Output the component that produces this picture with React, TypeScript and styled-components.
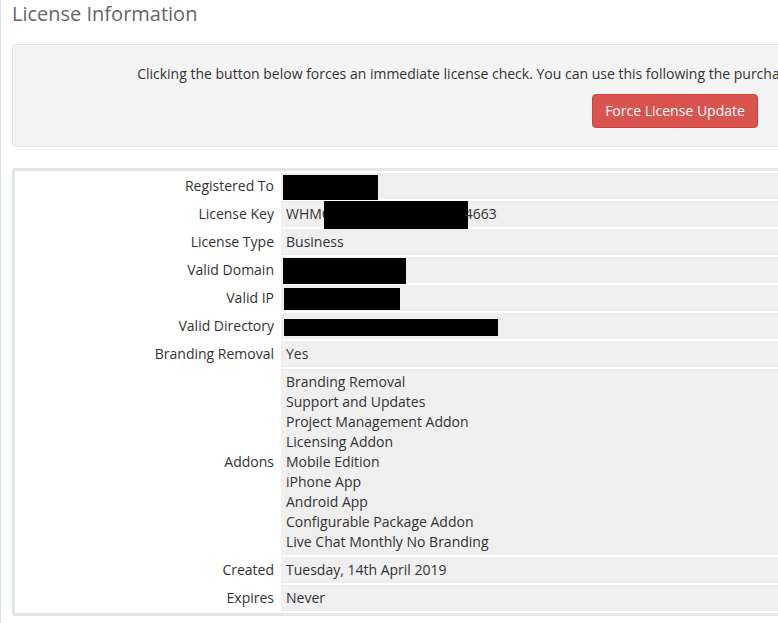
import React from 'react'
import styled, { createGlobalStyle } from 'styled-components'

const GlobalStyle = createGlobalStyle`
  html, body {
    margin: 0;
    padding: 0;
    background: #fff;
    overflow: hidden;
  }
  body {
    font-family: "Open Sans", "Liberation Sans", sans-serif;
    font-size: 14px;
    color: #333;
  }
`

const Page = styled.div`
  border-left: 1px solid #d3deec;
  padding: 0 0 0 11px;
  height: 623px;
  box-sizing: border-box;
  overflow: hidden;
`

const Title = styled.h1`
  margin: 0;
  font-size: 20px;
  font-weight: 400;
  line-height: 27px;
  color: #666;
`

const Alert = styled.div`
  width: 1326px;
  box-sizing: border-box;
  margin-top: 17px;
  padding: 19px 15px 18px;
  background: #f4f4f4;
  border: 1px solid #e3e3e3;
  border-radius: 4px;
  text-align: center;
`

const AlertText = styled.p`
  margin: 0 0 10px;
  line-height: 20px;
  white-space: nowrap;
`

const DangerButton = styled.button`
  font-family: inherit;
  font-size: 14px;
  line-height: 20px;
  padding: 6px 12px;
  color: #fff;
  background: #d9534f;
  border: 1px solid #d43f3a;
  border-radius: 4px;
  cursor: pointer;
`

const InfoTable = styled.table`
  width: 1326px;
  margin-top: 21px;
  border: 3px solid #e1e6e9;
  border-radius: 3px;
  border-spacing: 2px;
  border-collapse: separate;
`

const Label = styled.td`
  width: 257px;
  height: 20px;
  padding: 3px 5px 3px 0;
  text-align: right;
  line-height: 20px;
  vertical-align: middle;
  white-space: nowrap;
`

const Value = styled.td`
  height: 20px;
  padding: 3px 5px;
  background: #efefef;
  line-height: 20px;
  vertical-align: middle;
  white-space: nowrap;
`

const Redacted = styled.span<{ $w: number; $h: number; $shift?: number }>`
  display: inline-block;
  vertical-align: middle;
  width: ${p => p.$w}px;
  height: ${p => p.$h}px;
  margin-top: ${p => -(p.$h - 10) / 2}px;
  margin-bottom: ${p => -(p.$h - 10) / 2}px;
  background: #000;
  margin-left: ${p => p.$shift ?? 0}px;
`

const AddonLine = styled.div`
  line-height: 20px;
`

const addons = [
  'Branding Removal',
  'Support and Updates',
  'Project Management Addon',
  'Licensing Addon',
  'Mobile Edition',
  'iPhone App',
  'Android App',
  'Configurable Package Addon',
  'Live Chat Monthly No Branding',
]

const App = () => {
  return (
    <>
      <GlobalStyle />
      <Page>
        <Title>License Information</Title>
        <Alert>
          <AlertText>
            Clicking the button below forces an immediate license check. You can use this following the purchase of new addons or upgrades to ensure your license is up to date.
          </AlertText>
          <DangerButton>Force License Update</DangerButton>
        </Alert>
        <InfoTable>
          <tbody>
            <tr>
              <Label>Registered To</Label>
              <Value><Redacted $w={95} $h={25} $shift={-3} /></Value>
            </tr>
            <tr>
              <Label>License Key</Label>
              <Value>
                WHMC<Redacted $w={144} $h={28} $shift={-7} style={{ marginRight: -3 }} />4663
              </Value>
            </tr>
            <tr>
              <Label>License Type</Label>
              <Value>Business</Value>
            </tr>
            <tr>
              <Label>Valid Domain</Label>
              <Value><Redacted $w={123} $h={26} $shift={-3} /></Value>
            </tr>
            <tr>
              <Label>Valid IP</Label>
              <Value><Redacted $w={116} $h={22} $shift={-2} /></Value>
            </tr>
            <tr>
              <Label>Valid Directory</Label>
              <Value><Redacted $w={214} $h={17} $shift={-2} /></Value>
            </tr>
            <tr>
              <Label>Branding Removal</Label>
              <Value>Yes</Value>
            </tr>
            <tr>
              <Label>Addons</Label>
              <Value>
                {addons.map(a => (
                  <AddonLine key={a}>{a}</AddonLine>
                ))}
              </Value>
            </tr>
            <tr>
              <Label>Created</Label>
              <Value>Tuesday, 14th April 2019</Value>
            </tr>
            <tr>
              <Label>Expires</Label>
              <Value>Never</Value>
            </tr>
          </tbody>
        </InfoTable>
      </Page>
    </>
  )
}

export default App
